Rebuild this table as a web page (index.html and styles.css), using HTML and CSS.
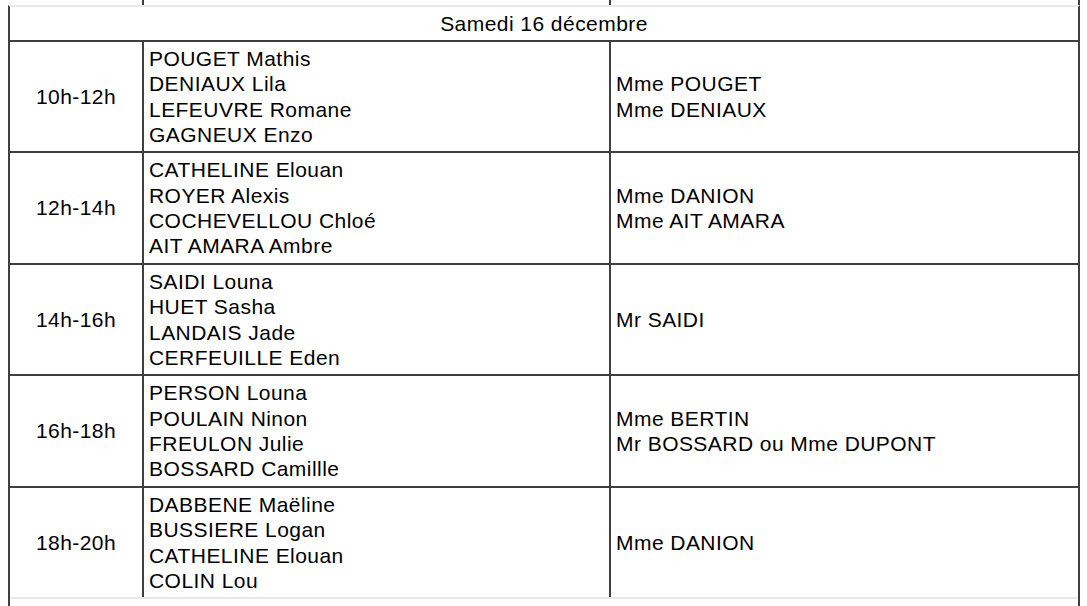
FILE: index.html
```html
<!DOCTYPE html>
<html lang="fr">
<head>
<meta charset="utf-8">
<title>Samedi 16 décembre</title>
<link rel="stylesheet" href="styles.css">
</head>
<body>
<div class="page">
  <div class="prev">
    <div class="pc pc-time"></div>
    <div class="pc pc-names"></div>
    <div class="pc pc-staff"></div>
  </div>
  <div class="sheet">
    <div class="day">Samedi 16 décembre</div>

    <div class="row">
      <div class="cell time">10h-12h</div>
      <div class="cell names">
        <span>POUGET Mathis</span><span>DENIAUX Lila</span><span>LEFEUVRE Romane</span><span>GAGNEUX Enzo</span>
      </div>
      <div class="cell staff"><span>Mme POUGET</span><span>Mme DENIAUX</span></div>
    </div>

    <div class="row tall">
      <div class="cell time">12h-14h</div>
      <div class="cell names">
        <span>CATHELINE Elouan</span><span>ROYER Alexis</span><span>COCHEVELLOU Chloé</span><span>AIT AMARA Ambre</span>
      </div>
      <div class="cell staff"><span>Mme DANION</span><span>Mme AIT AMARA</span></div>
    </div>

    <div class="row">
      <div class="cell time">14h-16h</div>
      <div class="cell names">
        <span>SAIDI Louna</span><span>HUET Sasha</span><span>LANDAIS Jade</span><span>CERFEUILLE Eden</span>
      </div>
      <div class="cell staff"><span>Mr SAIDI</span></div>
    </div>

    <div class="row tall">
      <div class="cell time">16h-18h</div>
      <div class="cell names">
        <span>PERSON Louna</span><span>POULAIN Ninon</span><span>FREULON Julie</span><span>BOSSARD Camillle</span>
      </div>
      <div class="cell staff"><span>Mme BERTIN</span><span>Mr BOSSARD ou Mme DUPONT</span></div>
    </div>

    <div class="row last">
      <div class="cell time">18h-20h</div>
      <div class="cell names">
        <span>DABBENE Maëline</span><span>BUSSIERE Logan</span><span>CATHELINE Elouan</span><span>COLIN Lou</span>
      </div>
      <div class="cell staff"><span>Mme DANION</span></div>
    </div>
  </div>
  <div class="next"></div>
</div>
</body>
</html>
```

FILE: styles.css
```css
html, body {
  margin: 0;
  padding: 0;
  background: #ffffff;
}

body {
  font-family: "Liberation Sans", Arial, Helvetica, sans-serif;
  font-size: 21px;
  letter-spacing: 0.45px;
  color: #000000;
  overflow: hidden;
}

.page {
  margin-left: 8px;
  width: 1072px;
}

.prev {
  display: grid;
  grid-template-columns: 134px 467px 1fr;
  height: 5px;
  padding-left: 2px;
  border-right: 2px solid #3f3f3f;
}

.pc-time,
.pc-names {
  border-right: 2px solid #3f3f3f;
}

.sheet {
  border-top: 2px solid #e8e8e8;
  border-left: 2px solid #3f3f3f;
  border-right: 2px solid #3f3f3f;
}

.day {
  height: 33px;
  display: flex;
  align-items: center;
  justify-content: center;
  border-bottom: 2px solid #3f3f3f;
}

.row {
  display: grid;
  grid-template-columns: 134px 467px 1fr;
  height: 111px;
  box-sizing: border-box;
  border-bottom: 2px solid #3f3f3f;
}

.row.tall {
  height: 112px;
}

.row.last {
  height: 111px;
  border-bottom: 2px solid #e8e8e8;
}

.cell {
  display: flex;
  flex-direction: column;
  justify-content: center;
  line-height: 25.3px;
}

.time {
  align-items: center;
  border-right: 2px solid #3f3f3f;
}

.names {
  padding-left: 5px;
  border-right: 2px solid #3f3f3f;
}

.staff {
  padding-left: 5px;
}

.next {
  height: 20px;
  border-left: 2px solid #3f3f3f;
  border-right: 2px solid #3f3f3f;
}
```
